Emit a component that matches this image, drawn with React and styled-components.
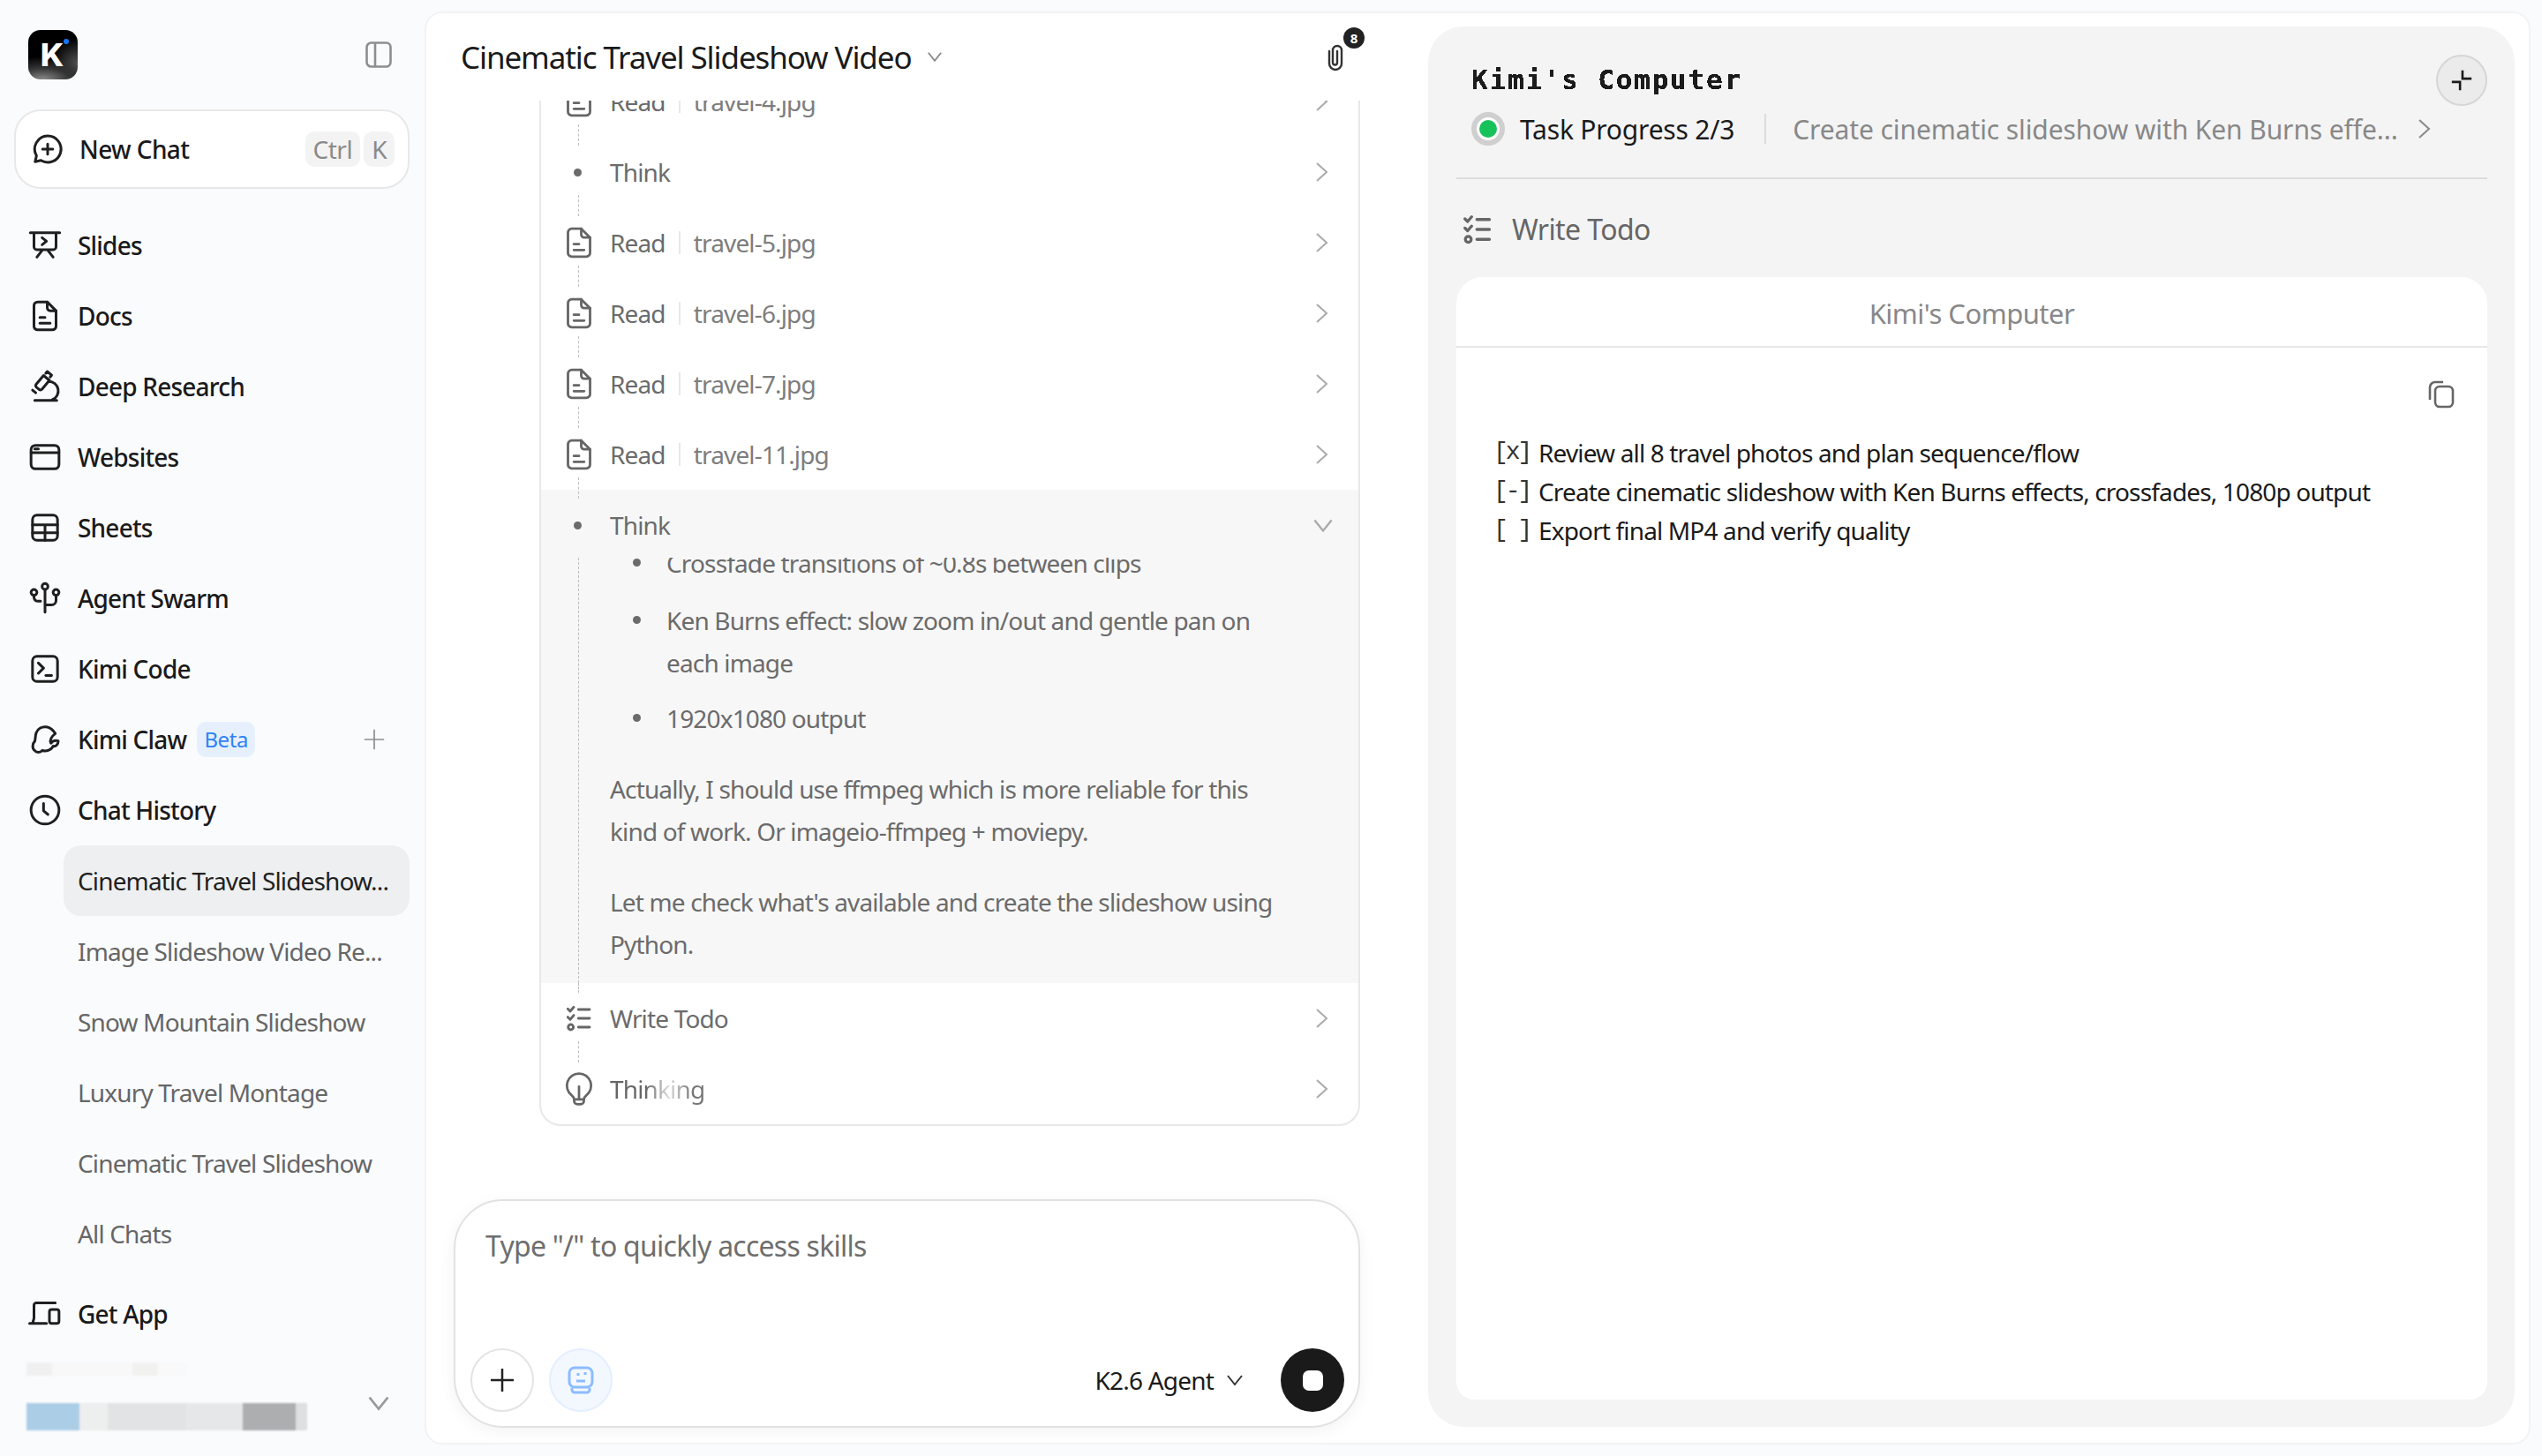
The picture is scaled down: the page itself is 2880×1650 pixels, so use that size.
import React from "react";
import styled, { createGlobalStyle } from "styled-components";

const Global = createGlobalStyle`
  html, body { margin: 0; padding: 0; background: #fafbfd; }
  * { box-sizing: border-box; }
  svg { flex: none; }
  body { font-family: "Noto Sans", "Open Sans", sans-serif; color: #1a1a1a; }
`;

const Page = styled.div`
  width: 2880px; height: 1650px; display: flex; background: #fafbfd; overflow: hidden;
`;
const Sidebar = styled.aside`
  width: 481px; flex: none; padding: 34px 17px 0 16px; display: flex; flex-direction: column;
`;
const LogoRow = styled.div`
  height: 56px; display: flex; align-items: center; justify-content: space-between; padding: 0 20px 0 16px;
`;
const Logo = styled.div`
  width: 56px; height: 56px; border-radius: 14px; position: relative; overflow: hidden;
  background: radial-gradient(ellipse 60px 26px at 30% 100%, #8a8a8a 0, #333 50%, transparent 100%),
    radial-gradient(circle 30px at 100% 70%, #555 0, transparent 100%), #000;
  color: #fff; font: 800 36px/56px Inter, sans-serif; text-align: center; padding-right: 2px;
  &::after { content: ""; position: absolute; top: 10px; right: 10px; width: 6px; height: 6px; border-radius: 50%; background: #1476ff; }
`;
const NewChat = styled.div`
  margin-top: 34px; height: 90px; background: #fff; border: 2px solid #e8e8e8; border-radius: 30px;
  display: flex; align-items: center; padding: 0 15px 0 16px;
`;
const NewChatLabel = styled.span`
  margin-left: 16px; flex: 1; font-size: 28px; font-weight: 500; letter-spacing: -0.6px;
`;
const Key = styled.span`
  height: 40px; padding: 0 9px; margin-left: 4px; background: #f3f3f3; border-radius: 10px;
  color: #8a8a8a; font-size: 28px; line-height: 40px; letter-spacing: -0.5px;
`;
const Nav = styled.nav` margin-top: 24px; display: flex; flex-direction: column; `;
const NavItem = styled.div`
  height: 80px; display: flex; align-items: center; padding-left: 15px; gap: 17px;
  font-size: 28px; font-weight: 500; letter-spacing: -0.8px; color: #1a1a1a;
  margin-top: ${p => p.$gap || 0}px;
`;
const Beta = styled.span`
  height: 40px; padding: 0 8px; margin-left: -5px; background: #e6f0fd; color: #2f82f6; border-radius: 10px;
  font-size: 24px; font-weight: 400; line-height: 40px; letter-spacing: -0.4px;
`;
const NavAdd = styled.span` margin-left: auto; margin-right: 28px; display: flex; `;
const SubItem = styled.div`
  height: 80px; margin-left: 56px; padding: 0 16px; border-radius: 20px; display: flex; align-items: center;
  font-size: 28px; letter-spacing: -0.85px; white-space: nowrap;
  background: ${p => (p.$active ? "#eeeff0" : "transparent")};
  color: ${p => (p.$active ? "#1f1f1f" : "#666")};
`;
const Account = styled.div`
  margin-top: 15px; height: 77px; display: flex; justify-content: space-between; align-items: flex-end; padding: 0 22px 0 14px;
`;
const BlurStack = styled.div` display: flex; flex-direction: column; gap: 31px; filter: blur(1px); `;
const BlurBar = styled.div`
  height: ${p => p.$h}px; width: ${p => p.$w}px; background: ${p => p.$bg};
`;
const AccountChevron = styled.span` margin-bottom: 22px; display: flex; `;

const Main = styled.main`
  flex: 1; margin: 13px 13px 13px 0; background: #fff; border: 2px solid #f3f3f5; border-radius: 20px;
  display: flex; min-width: 0;
`;
const ChatColumn = styled.section`
  width: 1135px; flex: none; display: flex; flex-direction: column;
`;
const ChatHead = styled.header`
  height: 99px; flex: none; display: flex; align-items: center; padding: 0 93px 0 39px;
`;
const Title = styled.h1`
  margin: 0; font-size: 35px; font-weight: 400; letter-spacing: -1.1px; color: #1a1a1a;
`;
const TitleChevron = styled.span` display: flex; margin-left: 17px; `;
const Clip = styled.div` margin-left: auto; position: relative; display: flex; `;
const Badge = styled.span`
  position: absolute; left: 21px; top: -18px; width: 24px; height: 24px; border-radius: 50%;
  background: #222; color: #fff; font-size: 15px; font-weight: 700; text-align: center; line-height: 24px;
`;
const Scroller = styled.div` height: 1245px; flex: none; overflow: hidden; padding: 0 77px 0 128px; `;
const Steps = styled.div`
  margin-top: -39px; border: 2px solid #e8e8e8; border-top: none; border-radius: 0 0 24px 24px; overflow: hidden;
`;
const Row = styled.div`
  height: 80px; display: flex; align-items: center; padding: 0 33px 0 26px; position: relative; color: #6b6b6b;
  font-size: 28px; letter-spacing: -0.85px;
  ${p => p.$link && `&::after { content: ""; position: absolute; left: 42px; top: 66px; height: 24px; border-left: 1px dashed #bdbdbd; z-index: 2; }`}
  ${p => p.$lead && `&::before { content: ""; position: absolute; left: 42px; top: 0; height: 11px; border-left: 1px dashed #bdbdbd; }`}
`;
const RowIcon = styled.span` width: 34px; flex: none; display: flex; justify-content: center; margin-right: 18px; `;
const Dot = styled.span` width: 9px; height: 9px; border-radius: 50%; background: #6b6b6b; margin-right: 3px; `;
const Sep = styled.span` width: 2px; height: 26px; background: #e8e8e8; margin: 0 15px; `;
const FileName = styled.span` color: #7d7d7d; `;
const RowEnd = styled.span` margin-left: auto; display: flex; margin-right: ${p => p.$shift || 0}px; `;
const Shimmer = styled.span`
  background: linear-gradient(90deg, #666 0, #666 38%, #ddd 62%, #777 88%);
  -webkit-background-clip: text; background-clip: text; color: transparent;
`;
const ThinkBlock = styled.div` background: #f7f7f7; `;
const ThinkBody = styled.div`
  margin: -3px 0 0 42px; height: 482px; overflow: hidden; border-left: 1px dashed #bdbdbd; padding: 0 80px 0 35px;
  color: #6b6b6b; font-size: 28px; line-height: 48px; letter-spacing: -0.85px;
`;
const BulletList = styled.ul` list-style: none; margin: -18px 0 0; padding: 0; `;
const Bullet = styled.li`
  position: relative; padding-left: 64px; margin-bottom: 15px;
  &:first-child { margin-bottom: 17px; }
  &::before { content: ""; position: absolute; left: 26px; top: 19px; width: 9px; height: 9px; border-radius: 50%; background: #6b6b6b; }
`;
const Para = styled.p` margin: 32px 0 0; `;

const InputBox = styled.div`
  margin: 0 0 0 31px; width: 1027px; height: 259px; flex: none; background: #fff; border: 2px solid #e2e2e2; border-radius: 56px;
  box-shadow: 0 4px 18px rgba(0,0,0,.05); display: flex; flex-direction: column; padding: 30px 16px 16px 17px;
`;
const Placeholder = styled.div`
  flex: 1; padding-left: 17px; font-size: 32px; line-height: 42px; color: #6e6e6e; letter-spacing: -0.75px;
`;
const InputBar = styled.div` display: flex; align-items: center; gap: 17px; `;
const RoundBtn = styled.span`
  width: 72px; height: 72px; border-radius: 50%; display: flex; align-items: center; justify-content: center; flex: none;
  background: ${p => p.$bg || "#fff"}; border: 2px solid ${p => p.$line || "#e4e4e4"};
`;
const Model = styled.span`
  margin-left: auto; display: flex; align-items: center; gap: 14px; margin-right: 25px; font-size: 28px; letter-spacing: -0.8px;
`;
const StopBtn = styled.span`
  width: 72px; height: 72px; border-radius: 50%; background: #1a1a1a; display: flex; align-items: center; justify-content: center; flex: none;
  &::after { content: ""; width: 23px; height: 23px; border-radius: 7px; background: #fff; }
`;

const Computer = styled.section`
  flex: 1; margin: 15px 16px 18px 0; background: #f4f4f4; border-radius: 40px; padding: 32px 31px 31px 32px;
  display: flex; flex-direction: column; min-width: 0;
`;
const CompHead = styled.div`
  display: flex; align-items: flex-start; padding: 0 0 35px 17px; border-bottom: 2px solid #dcdcdc; position: relative;
`;
const CompTitles = styled.div` flex: 1; padding-top: 10px; `;
const PixelTitle = styled.h2`
  margin: 0; font: 700 31px/36px "DejaVu Sans Mono", "Liberation Mono", monospace; letter-spacing: 1.8px; color: #1a1a1a;
  filter: url(#crisp);
`;
const StatusRow = styled.div` margin-top: 18px; height: 40px; display: flex; align-items: center; `;
const StatusDot = styled.span`
  width: 38px; height: 38px; border-radius: 50%; background: #fff; border: 6px solid #cfcfcf; display: flex; align-items: center; justify-content: center; flex: none;
  &::after { content: ""; width: 20px; height: 20px; border-radius: 50%; background: #17c25a; }
`;
const StatusLabel = styled.span` margin-left: 17px; font-size: 30px; letter-spacing: -0.2px; `;
const StatusSep = styled.span` width: 2px; height: 34px; background: #dcdcdc; margin: 0 30px 0 34px; `;
const StatusText = styled.span` font-size: 30px; color: #888; letter-spacing: -0.1px; white-space: nowrap; margin-right: 22px; `;
const Collapse = styled.span`
  position: absolute; right: 0; top: 0; width: 58px; height: 58px; border-radius: 50%; background: #ebebeb; border: 2px solid #d6d6d6; display: flex;
`;
const ToolRow = styled.div`
  height: 111px; flex: none; display: flex; align-items: center; gap: 21px; padding: 2px 0 0 6px; color: #666; font-size: 32px; letter-spacing: -0.6px;
`;
const Sheet = styled.div`
  flex: 1; background: #fff; border-radius: 30px 30px 20px 20px; display: flex; flex-direction: column;
`;
const SheetHead = styled.div`
  height: 80px; flex: none; border-bottom: 2px solid #e6e6e6; display: flex; align-items: center; justify-content: center;
  padding-top: 4px; font-size: 31px; color: #888; letter-spacing: -0.5px;
`;
const SheetTools = styled.div` display: flex; justify-content: flex-end; padding: 37px 36px 0 0; `;
const TodoList = styled.div` margin-top: 28px; padding-left: 47px; display: flex; flex-direction: column; `;
const Todo = styled.div` height: 44px; display: flex; align-items: center; font-size: 28px; letter-spacing: -0.85px; color: #1a1a1a; `;
const Box = styled.span`
  width: 46px; flex: none; font: 400 28px/44px "Liberation Mono", monospace; letter-spacing: -3px; color: #333; margin-left: -5px; margin-right: 5px; white-space: pre;
`;

const Ico = ({ s = 40, v = 24, c = "#1f1f1f", w = 1.8, children }) => (
  <svg width={s} height={s} viewBox={`0 0 ${v} ${v}`} fill="none" stroke={c} strokeWidth={w} strokeLinecap="round" strokeLinejoin="round">
    {children}
  </svg>
);
const ChevR = ({ c = "#aaa" }) => (
  <svg width="16" height="24" viewBox="0 0 16 24" fill="none" stroke={c} strokeWidth="2"><path d="M2 2 L13 12 L2 22" /></svg>
);
const ChevD = ({ c = "#888", w = 20 }) => (
  <svg width={w} height={w * 0.7} viewBox="0 0 20 14" fill="none" stroke={c} strokeWidth="2"><path d="M2 2 L10 12 L18 2" /></svg>
);
const Doc = ({ c = "#666", s = 40, w = 1.7 }) => (
  <Ico s={s} c={c} w={w}>
    <path d="M7 2.500h6.500l6 6V19a2.500 2.500 0 0 1-2.500 2.500H7A2.500 2.500 0 0 1 4.500 19V5A2.500 2.500 0 0 1 7 2.500Z" />
    <path d="M13.500 2.500V6.500a2 2 0 0 0 2 2h4M8.500 13H12M8.500 17h7" />
  </Ico>
);
const TodoIcon = ({ c = "#666", s = 34 }) => (
  <Ico s={s} c={c} w={2.2}>
    <path d="M2.500 4l2 2 3-3.500M2.500 11l2 2 3-3.500M11.500 4.500H21M11.500 12H21M11.500 19.500H21" />
    <circle cx="5" cy="19.500" r="2.200" />
  </Ico>
);
const Plus = ({ s = 28, c = "#222", w = 2.5 }) => (
  <svg width={s} height={s} viewBox="0 0 28 28" stroke={c} strokeWidth={w} fill="none"><path d="M14 1V27M1 14H27" /></svg>
);

const navItems = [
  ["Slides", <><path d="M2 3.500H22M4.500 3.500V13a2 2 0 0 0 2 2h11a2 2 0 0 0 2-2V3.500M10 6.800l3 2.400-3 2.400M10 15.500L6.500 20M14 15.500l3.500 4.500" /></>],
  ["Docs", <><path d="M7 2.500h6.500l6 6V19a2.500 2.500 0 0 1-2.500 2.500H7A2.500 2.500 0 0 1 4.500 19V5A2.500 2.500 0 0 1 7 2.500Z" /><path d="M13.500 2.500V6.500a2 2 0 0 0 2 2h4M8.500 13H12M8.500 17h7" /></>],
  ["Deep Research", <><path d="M5 21.500H20M14.500 8.500a6.500 6.500 0 0 1 2.500 12.500M3.500 14.500l2.200 1.800M6 10.500l5-6 4 3.300-5 6a1.500 1.500 0 0 1-2 .2L6.200 12.500a1.500 1.500 0 0 1-.2-2ZM12.500 3l1-1.200 3 2.500-1 1.200" /></>],
  ["Websites", <><rect x="2.500" y="4" width="19" height="16" rx="3" /><path d="M2.500 9H21.500M5 6.500H7.500" /></>],
  ["Sheets", <><rect x="3.500" y="3.500" width="17" height="17" rx="3" /><path d="M3.500 10H20.500M3.500 15.500H20.500M12 10V20.500" /></>],
  ["Agent Swarm", <><circle cx="12" cy="4" r="2" /><circle cx="4.500" cy="8" r="2" /><circle cx="19.500" cy="8" r="2" /><path d="M12 6V21.500M4.500 10v1.500a3 3 0 0 0 3 2.500H9M19.500 10v3.500a3 3 0 0 1-3 3H12" /></>],
  ["Kimi Code", <><rect x="3.500" y="3.500" width="17" height="17" rx="3" /><path d="M7.500 8l3.500 3.500L7.500 15M12.500 16.500H16.500" /></>],
];

export default function App() {
  return (
    <Page>
      <Global />
      <svg width="0" height="0" style={{ position: "absolute" }}>
        <filter id="crisp"><feComponentTransfer><feFuncA type="discrete" tableValues="0 1 1" /></feComponentTransfer></filter>
      </svg>
      <Sidebar>
        <LogoRow>
          <Logo>K</Logo>
          <svg width="30" height="30" viewBox="0 0 30 30" fill="none" stroke="#8e8e8e" strokeWidth="2.600">
            <rect x="1.500" y="1.500" width="27" height="27" rx="5" /><path d="M11 1.500V28.500" />
          </svg>
        </LogoRow>
        <NewChat>
          <Ico>
            <path d="M12 3a9 9 0 1 1-4.600 16.700L3.500 20.500l.9-4A9 9 0 0 1 12 3Z" /><path d="M12 8.500v7M8.500 12h7" />
          </Ico>
          <NewChatLabel>New Chat</NewChatLabel>
          <Key>Ctrl</Key><Key>K</Key>
        </NewChat>
        <Nav>
          {navItems.map(([t, d]) => (
            <NavItem key={t}><Ico>{d}</Ico>{t}</NavItem>
          ))}
          <NavItem>
            <Ico>
              <path d="M13 3.500C10 3 7 4.500 6 7.500c-.7 2-.4 4-1 5.800-1.500 1.500-2 4.700 0 6.200 1 1.500 4 1.500 5 0 3 1 6.500-.5 7.500-3 2 .5 3.500-1.500 3.500-3.500-2-.5-4 .3-5 1.500-.8-2 .3-4.500 3-6.500-1.500-2.500-3.500-4-6-4.500Z" />
            </Ico>
            Kimi Claw<Beta>Beta</Beta>
            <NavAdd><Plus s={24} c="#8e8e8e" w={2} /></NavAdd>
          </NavItem>
          <NavItem>
            <Ico><circle cx="12" cy="12" r="9.500" /><path d="M11 7.500V12.500l3 2.500" /></Ico>Chat History
          </NavItem>
          <SubItem $active>Cinematic Travel Slideshow...</SubItem>
          <SubItem>Image Slideshow Video Re...</SubItem>
          <SubItem>Snow Mountain Slideshow</SubItem>
          <SubItem>Luxury Travel Montage</SubItem>
          <SubItem>Cinematic Travel Slideshow</SubItem>
          <SubItem>All Chats</SubItem>
          <NavItem $gap={11}>
            <Ico><path d="M4.500 15V6A1.500 1.500 0 0 1 6 4.500h13M1.500 18.500H13M4.500 15L3.500 18.500" /><rect x="15" y="9" width="6.500" height="9.500" rx="1.500" /></Ico>Get App
          </NavItem>
        </Nav>
        <Account>
          <BlurStack>
            <BlurBar $h={15} $w={182} $bg="linear-gradient(90deg,#f0f0f1 0 16%,#f8f8f9 16% 66%,#f1f2ef 66% 82%,#f9f9fa 82%)" />
            <BlurBar $h={31} $w={318} $bg="linear-gradient(90deg,#abcde6 0 19%,#edeeee 19% 29%,#e2e3e4 29% 57%,#e6e7e8 57% 77%,#adaeaf 77% 96%,#dedfe0 96%)" />
          </BlurStack>
          <AccountChevron><ChevD c="#999" w={26} /></AccountChevron>
        </Account>
      </Sidebar>
      <Main>
        <ChatColumn>
          <ChatHead>
            <Title>Cinematic Travel Slideshow Video</Title>
            <TitleChevron><ChevD c="#888" w={18} /></TitleChevron>
            <Clip>
              <svg width="24" height="32" viewBox="0 0 24 32" fill="none" stroke="#333" strokeWidth="2.400" strokeLinecap="round">
                <path d="M5 9V23a7 7 0 0 0 14 0V8a5 5 0 0 0-10 0V22a2.500 2.500 0 0 0 5 0V9" />
              </svg>
              <Badge>8</Badge>
            </Clip>
          </ChatHead>
          <Scroller>
            <Steps>
              {[["Read", "travel-4.jpg"], ["Think"], ["Read", "travel-5.jpg"], ["Read", "travel-6.jpg"], ["Read", "travel-7.jpg"], ["Read", "travel-11.jpg"]].map(([a, b]) => (
                <Row $link key={b || a}>
                  <RowIcon>{b ? <Doc /> : <Dot />}</RowIcon>
                  {a}
                  {b && <Sep />}
                  {b && <FileName>{b}</FileName>}
                  <RowEnd><ChevR /></RowEnd>
                </Row>
              ))}
              <ThinkBlock>
                <Row>
                  <RowIcon><Dot /></RowIcon>Think
                  <RowEnd $shift={-5}><ChevD c="#aaa" w={24} /></RowEnd>
                </Row>
                <ThinkBody>
                  <BulletList>
                    <Bullet>Crossfade transitions of ~0.8s between clips</Bullet>
                    <Bullet>Ken Burns effect: slow zoom in/out and gentle pan on each image</Bullet>
                    <Bullet>1920x1080 output</Bullet>
                  </BulletList>
                  <Para>Actually, I should use ffmpeg which is more reliable for this kind of work. Or imageio-ffmpeg + moviepy.</Para>
                  <Para>Let me check what's available and create the slideshow using Python.</Para>
                </ThinkBody>
              </ThinkBlock>
              <Row $link $lead>
                <RowIcon><TodoIcon s={32} /></RowIcon>Write Todo
                <RowEnd><ChevR /></RowEnd>
              </Row>
              <Row>
                <RowIcon>
                  <Ico s={44} c="#666" w={1.500}>
                    <path d="M12 2.500a7.500 7.500 0 0 0-4.500 13.500c1 .8 1.500 1.500 1.500 2.500v1a2 2 0 0 0 2 2h2a2 2 0 0 0 2-2v-1c0-1 .5-1.700 1.500-2.500A7.500 7.500 0 0 0 12 2.500Z" />
                    <path d="M12 10.500V18M9 18.500h6" />
                  </Ico>
                </RowIcon>
                <Shimmer>Thinking</Shimmer>
                <RowEnd><ChevR /></RowEnd>
              </Row>
            </Steps>
          </Scroller>
          <InputBox>
            <Placeholder>Type "/" to quickly access skills</Placeholder>
            <InputBar>
              <RoundBtn><Plus /></RoundBtn>
              <RoundBtn $bg="#f3f8ff" $line="#e4efff">
                <svg width="30" height="32" viewBox="0 0 30 32" fill="none" stroke="#8bbcff" strokeWidth="3">
                  <rect x="2" y="2" width="26" height="22" rx="6" />
                  <path d="M5 25v2a3 3 0 0 0 3 3h14a3 3 0 0 0 3-3v-2M12 8v3M20 7v3M10 17h10" />
                </svg>
              </RoundBtn>
              <Model>K2.6 Agent <ChevD c="#333" w={20} /></Model>
              <StopBtn />
            </InputBar>
          </InputBox>
        </ChatColumn>
        <Computer>
          <CompHead>
            <CompTitles>
              <PixelTitle>Kimi's Computer</PixelTitle>
              <StatusRow>
                <StatusDot />
                <StatusLabel>Task Progress 2/3</StatusLabel>
                <StatusSep />
                <StatusText>Create cinematic slideshow with Ken Burns effe...</StatusText>
                <ChevR c="#888" />
              </StatusRow>
            </CompTitles>
            <Collapse>
              <svg width="54" height="54" viewBox="0 0 58 58" fill="none" stroke="#1a1a1a" strokeWidth="2.800"><path d="M30 17V27H41M17 31H27V41" /></svg>
            </Collapse>
          </CompHead>
          <ToolRow><TodoIcon s={36} />Write Todo</ToolRow>
          <Sheet>
            <SheetHead>Kimi's Computer</SheetHead>
            <SheetTools>
              <svg width="32" height="32" viewBox="0 0 32 32" fill="none" stroke="#666" strokeWidth="2.600">
                <rect x="9" y="7" width="20" height="23" rx="5" /><path d="M3 22V8a6 6 0 0 1 6-6h9" />
              </svg>
            </SheetTools>
            <TodoList>
              <Todo><Box>[x]</Box>Review all 8 travel photos and plan sequence/flow</Todo>
              <Todo><Box>[-]</Box>Create cinematic slideshow with Ken Burns effects, crossfades, 1080p output</Todo>
              <Todo><Box>[ ]</Box>Export final MP4 and verify quality</Todo>
            </TodoList>
          </Sheet>
        </Computer>
      </Main>
    </Page>
  );
}
